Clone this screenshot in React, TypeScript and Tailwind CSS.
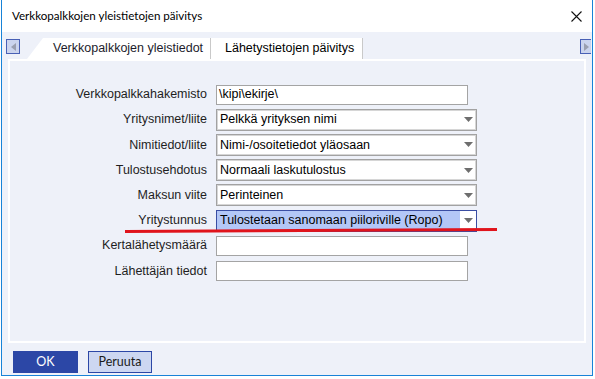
const rows: { label: string; value: string; kind: "text" | "select" | "active" }[] = [
  { label: "Verkkopalkkahakemisto", value: "\\kipi\\ekirje\\", kind: "text" },
  { label: "Yritysnimet/liite", value: "Pelkkä yrityksen nimi", kind: "select" },
  { label: "Nimitiedot/liite", value: "Nimi-/osoitetiedot yläosaan", kind: "select" },
  { label: "Tulostusehdotus", value: "Normaali laskutulostus", kind: "select" },
  { label: "Maksun viite", value: "Perinteinen", kind: "select" },
  { label: "Yritystunnus", value: "Tulostetaan sanomaan piiloriville (Ropo)", kind: "active" },
  { label: "Kertalähetysmäärä", value: "", kind: "text" },
  { label: "Lähettäjän tiedot", value: "", kind: "text" },
];

function Caret() {
  return (
    <svg width="9" height="5" viewBox="0 0 9 5">
      <polygon points="0,0 9,0 4.5,5" fill="#6e6e6e" />
    </svg>
  );
}

function Field({ value, kind }: { value: string; kind: "text" | "select" | "active" }) {
  if (kind === "text") {
    return (
      <div className="w-[252px] h-[20px] bg-white border border-[#a4a4a4] pl-[2px] flex items-center text-[12.5px] text-black">
        {value}
      </div>
    );
  }
  if (kind === "active") {
    return (
      <div className="w-[261px] h-[22px] border border-[#3a4ea3] bg-white flex items-stretch text-[12.5px] text-black">
        <div className="flex-1 bg-[#b3c7f7] pl-[3px] flex items-center">{value}</div>
        <div className="w-[16px] flex items-center justify-center">
          <Caret />
        </div>
      </div>
    );
  }
  return (
    <div className="w-[261px] h-[22px] bg-white border border-[#a2a2a2] shadow-[inset_0_0_0_1px_#d6d6d6] flex items-center text-[12.5px] text-black">
      <div className="flex-1 pl-[3px]">{value}</div>
      <div className="w-[16px] flex items-center justify-center">
        <Caret />
      </div>
    </div>
  );
}

export default function App() {
  return (
    <div className="w-[595px] h-[379px] bg-white relative font-['Liberation_Sans',Arial,sans-serif]">
      <div className="ml-px w-[592px] h-[376px] border-x border-b border-[#1883d7] bg-[#eef1f9] flex flex-col">
        {/* title bar */}
        <div className="h-[32px] bg-white flex items-center justify-between pl-[10px] pr-[10px] shrink-0">
          <span className="text-[11.6px] text-black font-['Lato',sans-serif]">
            Verkkopalkkojen yleistietojen päivitys
          </span>
          <svg width="11" height="11" viewBox="0 0 11 11">
            <path d="M0.5 0.5L10.5 10.5M10.5 0.5L0.5 10.5" stroke="#111" strokeWidth="1.1" />
          </svg>
        </div>

        {/* tab strip */}
        <div className="h-[27px] flex items-end shrink-0 pl-[4px] pr-[1px]">
          <div className="self-start mt-[7px] w-[14px] h-[15px] border border-[#4960b5] bg-[#cbd4ee] flex items-center justify-center">
            <svg width="5" height="8" viewBox="0 0 5 8">
              <polygon points="5,0 5,8 0,4" fill="#9a9fb0" />
            </svg>
          </div>
          <div className="ml-[7px] flex items-end h-[21px]">
            <svg width="16" height="21" viewBox="0 0 16 21" className="block">
              <polygon points="0,21 16,0 16,21" fill="#ffffff" />
            </svg>
            <div className="w-[168px] h-[21px] bg-white pl-[10px] flex items-center border-r border-[#c9c9c9] text-[12.5px] text-[#1c1c2c]">
              Verkkopalkkojen yleistiedot
            </div>
            <div className="w-[152px] h-[21px] bg-white pl-[14px] flex items-center border-r border-[#c9c9c9] text-[12.5px] text-black">
              Lähetystietojen päivitys
            </div>
          </div>
          <div className="ml-auto self-start mt-[7px] w-[11px] h-[15px] border border-r-0 border-[#4960b5] bg-[#cbd4ee] flex items-center justify-center">
            <svg width="5" height="8" viewBox="0 0 5 8">
              <polygon points="0,0 0,8 5,4" fill="#9a9fb0" />
            </svg>
          </div>
        </div>

        {/* content panel */}
        <div className="mx-[6px] h-[284px] border-2 border-white shrink-0 pt-[21px]">
          <div className="grid grid-cols-[197px_auto] gap-x-[9px] auto-rows-[25.2px]">
            {rows.map((r) => (
              <div key={r.label} className="contents">
                <div className="flex items-center justify-end text-[12.5px] text-[#1e1e1e]">
                  {r.label}
                </div>
                <div className="flex items-center">
                  <Field value={r.value} kind={r.kind} />
                </div>
              </div>
            ))}
          </div>
        </div>

        {/* footer buttons */}
        <div className="flex gap-[10px] pl-[11px] pt-[8px] font-['Lato',sans-serif] text-[12.5px]">
          <button className="w-[65px] h-[22px] bg-[#2c47a6] text-white flex items-center justify-center">
            OK
          </button>
          <button className="w-[64px] h-[22px] bg-[#cdd7f1] border border-[#2c47a6] text-[#1a1a1a] flex items-center justify-center">
            Peruuta
          </button>
        </div>
      </div>

      {/* red annotation line */}
      <div className="absolute left-[125px] top-[229px] w-[372px] h-[2.5px] bg-[#e0141c] rotate-[-0.3deg]" />
    </div>
  );
}
